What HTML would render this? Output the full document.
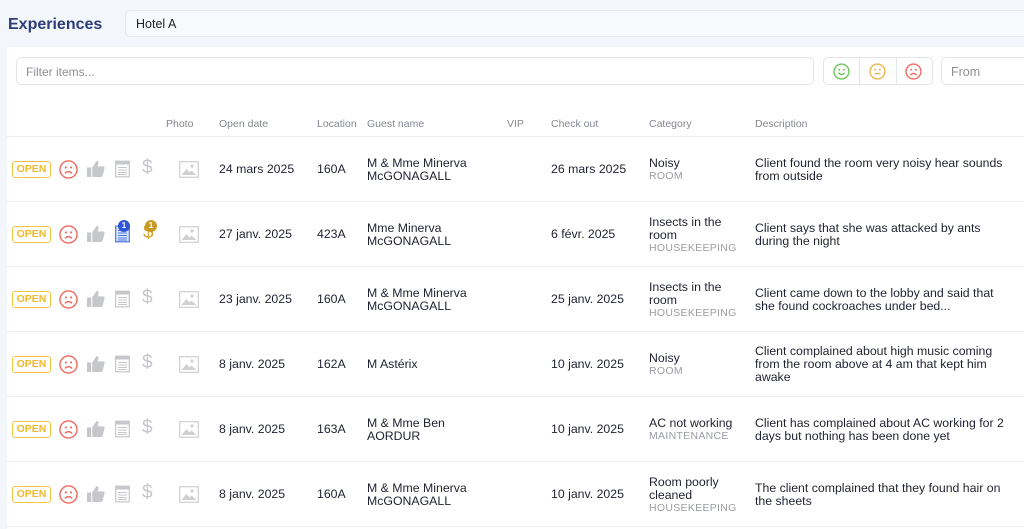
<!DOCTYPE html><html><head><meta charset="utf-8"><style>
*{margin:0;padding:0;box-sizing:border-box}
html,body{width:1024px;height:529px;overflow:hidden}
body{background:#f3f6fb;font-family:"Liberation Sans",sans-serif;color:#1f2130;position:relative}
.a{position:absolute}
.card{left:7px;top:47px;width:1030px;height:500px;background:#fff}
.inp{border:1px solid #e3e5ea;border-radius:5px;background:#fff}
.h{font-size:10.5px;color:#85878f;top:118px}
.row{position:absolute;left:7px;width:1020px;height:65px;border-top:1px solid #eceef2}
.c{position:absolute;top:0;height:65px;display:flex;flex-direction:column;justify-content:center;font-size:12.3px;line-height:13px}
.sub{font-size:10.5px;color:#9a9ca3;letter-spacing:.3px;line-height:12px}
.open{position:absolute;left:5px;top:24px;width:39px;height:17px;border:1.5px solid #f3c545;border-radius:3px;color:#f0b92d;font-size:10.5px;font-weight:bold;text-align:center;line-height:14px}
svg.i{position:absolute}
.d{position:absolute;left:135px;top:20px;font-size:19px;color:#c6c7cb}
</style></head><body>
<div class="a" style="left:8px;top:16px;font-size:16px;font-weight:bold;color:#2c3d78">Experiences</div>
<div class="a inp" style="left:125px;top:10px;width:920px;height:27px;background:#f7f9fc;border-color:#e6e9ee"><span style="position:absolute;left:10px;top:6px;font-size:12.5px;color:#222">Hotel A</span></div>
<div class="a card"></div>
<div class="a inp" style="left:16px;top:57px;width:798px;height:28px"><span style="position:absolute;left:9px;top:7px;font-size:12px;color:#8d8f96">Filter items...</span></div>
<div class="a inp" style="left:823px;top:57px;width:110px;height:28px"></div>
<div class="a" style="left:859px;top:58px;width:1px;height:26px;background:#e3e5ea"></div>
<div class="a" style="left:896px;top:58px;width:1px;height:26px;background:#e3e5ea"></div>
<svg class="a" style="left:833px;top:63px" width="17" height="17" viewBox="0 0 16 16"><circle cx="8" cy="8" r="7" fill="none" stroke="#6cc35a" stroke-width="1.3"/><circle cx="5.8" cy="6.3" r=".9" fill="#6cc35a"/><circle cx="10.2" cy="6.3" r=".9" fill="#6cc35a"/><path d="M5 9.3q3 3 6 0" fill="none" stroke="#6cc35a" stroke-width="1.3"/></svg>
<svg class="a" style="left:869px;top:63px" width="17" height="17" viewBox="0 0 16 16"><circle cx="8" cy="8" r="7" fill="none" stroke="#e6b64a" stroke-width="1.3"/><circle cx="5.8" cy="6.3" r=".9" fill="#e6b64a"/><circle cx="10.2" cy="6.3" r=".9" fill="#e6b64a"/><path d="M5.3 10h5.4" stroke="#e6b64a" stroke-width="1.3"/></svg>
<svg class="a" style="left:905px;top:63px" width="17" height="17" viewBox="0 0 16 16"><circle cx="8" cy="8" r="7" fill="none" stroke="#ee6a60" stroke-width="1.3"/><circle cx="5.8" cy="6.3" r=".9" fill="#ee6a60"/><circle cx="10.2" cy="6.3" r=".9" fill="#ee6a60"/><path d="M5 11.3q3-3 6 0" fill="none" stroke="#ee6a60" stroke-width="1.3"/></svg>
<div class="a inp" style="left:941px;top:57px;width:100px;height:28px"><span style="position:absolute;left:9px;top:7px;font-size:12.5px;color:#8d8f96">From</span></div>
<div class="a h" style="left:166px">Photo</div>
<div class="a h" style="left:219px">Open date</div>
<div class="a h" style="left:317px">Location</div>
<div class="a h" style="left:367px">Guest name</div>
<div class="a h" style="left:507px">VIP</div>
<div class="a h" style="left:551px">Check out</div>
<div class="a h" style="left:649px">Category</div>
<div class="a h" style="left:755px">Description</div>

<div class="row" style="top:136px">
<div class="open">OPEN</div>
<svg class="i" style="left:52px;top:23px" width="19" height="19" viewBox="0 0 16 16"><circle cx="8" cy="8" r="7.2" fill="none" stroke="#ee6a60" stroke-width="1.2"/><circle cx="5.8" cy="6.3" r=".9" fill="#ee6a60"/><circle cx="10.2" cy="6.3" r=".9" fill="#ee6a60"/><path d="M5 11.3q3-3 6 0" fill="none" stroke="#ee6a60" stroke-width="1.2"/></svg>
<svg class="i" style="left:80px;top:24px" width="18" height="16" viewBox="0 0 17 15"><rect x="0" y="6" width="4" height="9" fill="#c6c7cb"/><path d="M5 6l4-6q2 0 2 2l-1 3h5q2 0 1.5 2l-1.5 6q-.5 2-2 2H5z" fill="#c6c7cb"/></svg>
<svg class="i" style="left:108px;top:23px" width="15" height="18" viewBox="0 0 15 17"><rect x=".7" y=".7" width="13.6" height="15.6" fill="none" stroke="#c6c7cb" stroke-width="1.2"/><rect x="1" y="1" width="13" height="3" fill="#c6c7cb"/><path d="M3 7h9M3 9.5h9M3 12h9M3 14h9" stroke="#c6c7cb" stroke-width="1"/></svg>
<div class="d">$</div>
<svg class="i" style="left:172px;top:24px" width="20" height="17" viewBox="0 0 20 17"><rect x=".7" y=".7" width="18.6" height="15.6" fill="none" stroke="#cfd0d4" stroke-width="1.2"/><circle cx="13" cy="5" r="1.6" fill="#cfd0d4"/><path d="M2.5 14l5-6 3 3.5 2-2 5 4.5z" fill="#cfd0d4"/></svg>
<div class="c" style="left:212px">24 mars 2025</div>
<div class="c" style="left:310px">160A</div>
<div class="c" style="left:360px">M &amp; Mme Minerva<br>McGONAGALL</div>
<div class="c" style="left:544px">26 mars 2025</div>
<div class="c" style="left:642px">Noisy<span class="sub">ROOM</span></div>
<div class="c" style="left:748px">Client found the room very noisy hear sounds<br>from outside</div>
</div>

<div class="row" style="top:201px">
<div class="open">OPEN</div>
<svg class="i" style="left:52px;top:23px" width="19" height="19" viewBox="0 0 16 16"><circle cx="8" cy="8" r="7.2" fill="none" stroke="#ee6a60" stroke-width="1.2"/><circle cx="5.8" cy="6.3" r=".9" fill="#ee6a60"/><circle cx="10.2" cy="6.3" r=".9" fill="#ee6a60"/><path d="M5 11.3q3-3 6 0" fill="none" stroke="#ee6a60" stroke-width="1.2"/></svg>
<svg class="i" style="left:80px;top:24px" width="18" height="16" viewBox="0 0 17 15"><rect x="0" y="6" width="4" height="9" fill="#c6c7cb"/><path d="M5 6l4-6q2 0 2 2l-1 3h5q2 0 1.5 2l-1.5 6q-.5 2-2 2H5z" fill="#c6c7cb"/></svg>
<svg class="i" style="left:108px;top:23px" width="15" height="18" viewBox="0 0 15 17"><rect x=".7" y=".7" width="13.6" height="15.6" fill="#dce6fb" stroke="#4a78e0" stroke-width="1.2"/><path d="M3 5h9M3 7.5h9M3 10h9M3 12.5h9M3 14.5h9" stroke="#4a78e0" stroke-width="1"/></svg>
<div class="a" style="left:111px;top:18px;width:12px;height:12px;border-radius:6px;background:#2f55d4;color:#fff;font-size:8px;font-weight:bold;text-align:center;line-height:12px">1</div>
<div class="d" style="color:#d4a52a;left:136px">$</div>
<div class="a" style="left:138px;top:18px;width:12px;height:12px;border-radius:6px;background:#c89a25;color:#fff;font-size:8px;font-weight:bold;text-align:center;line-height:12px">1</div>
<svg class="i" style="left:172px;top:24px" width="20" height="17" viewBox="0 0 20 17"><rect x=".7" y=".7" width="18.6" height="15.6" fill="none" stroke="#cfd0d4" stroke-width="1.2"/><circle cx="13" cy="5" r="1.6" fill="#cfd0d4"/><path d="M2.5 14l5-6 3 3.5 2-2 5 4.5z" fill="#cfd0d4"/></svg>
<div class="c" style="left:212px">27 janv. 2025</div>
<div class="c" style="left:310px">423A</div>
<div class="c" style="left:360px">Mme Minerva<br>McGONAGALL</div>
<div class="c" style="left:544px">6 févr. 2025</div>
<div class="c" style="left:642px">Insects in the<br>room<span class="sub">HOUSEKEEPING</span></div>
<div class="c" style="left:748px">Client says that she was attacked by ants<br>during the night</div>
</div>

<div class="row" style="top:266px">
<div class="open">OPEN</div>
<svg class="i" style="left:52px;top:23px" width="19" height="19" viewBox="0 0 16 16"><circle cx="8" cy="8" r="7.2" fill="none" stroke="#ee6a60" stroke-width="1.2"/><circle cx="5.8" cy="6.3" r=".9" fill="#ee6a60"/><circle cx="10.2" cy="6.3" r=".9" fill="#ee6a60"/><path d="M5 11.3q3-3 6 0" fill="none" stroke="#ee6a60" stroke-width="1.2"/></svg>
<svg class="i" style="left:80px;top:24px" width="18" height="16" viewBox="0 0 17 15"><rect x="0" y="6" width="4" height="9" fill="#c6c7cb"/><path d="M5 6l4-6q2 0 2 2l-1 3h5q2 0 1.5 2l-1.5 6q-.5 2-2 2H5z" fill="#c6c7cb"/></svg>
<svg class="i" style="left:108px;top:23px" width="15" height="18" viewBox="0 0 15 17"><rect x=".7" y=".7" width="13.6" height="15.6" fill="none" stroke="#c6c7cb" stroke-width="1.2"/><rect x="1" y="1" width="13" height="3" fill="#c6c7cb"/><path d="M3 7h9M3 9.5h9M3 12h9M3 14h9" stroke="#c6c7cb" stroke-width="1"/></svg>
<div class="d">$</div>
<svg class="i" style="left:172px;top:24px" width="20" height="17" viewBox="0 0 20 17"><rect x=".7" y=".7" width="18.6" height="15.6" fill="none" stroke="#cfd0d4" stroke-width="1.2"/><circle cx="13" cy="5" r="1.6" fill="#cfd0d4"/><path d="M2.5 14l5-6 3 3.5 2-2 5 4.5z" fill="#cfd0d4"/></svg>
<div class="c" style="left:212px">23 janv. 2025</div>
<div class="c" style="left:310px">160A</div>
<div class="c" style="left:360px">M &amp; Mme Minerva<br>McGONAGALL</div>
<div class="c" style="left:544px">25 janv. 2025</div>
<div class="c" style="left:642px">Insects in the<br>room<span class="sub">HOUSEKEEPING</span></div>
<div class="c" style="left:748px">Client came down to the lobby and said that<br>she found cockroaches under bed...</div>
</div>

<div class="row" style="top:331px">
<div class="open">OPEN</div>
<svg class="i" style="left:52px;top:23px" width="19" height="19" viewBox="0 0 16 16"><circle cx="8" cy="8" r="7.2" fill="none" stroke="#ee6a60" stroke-width="1.2"/><circle cx="5.8" cy="6.3" r=".9" fill="#ee6a60"/><circle cx="10.2" cy="6.3" r=".9" fill="#ee6a60"/><path d="M5 11.3q3-3 6 0" fill="none" stroke="#ee6a60" stroke-width="1.2"/></svg>
<svg class="i" style="left:80px;top:24px" width="18" height="16" viewBox="0 0 17 15"><rect x="0" y="6" width="4" height="9" fill="#c6c7cb"/><path d="M5 6l4-6q2 0 2 2l-1 3h5q2 0 1.5 2l-1.5 6q-.5 2-2 2H5z" fill="#c6c7cb"/></svg>
<svg class="i" style="left:108px;top:23px" width="15" height="18" viewBox="0 0 15 17"><rect x=".7" y=".7" width="13.6" height="15.6" fill="none" stroke="#c6c7cb" stroke-width="1.2"/><rect x="1" y="1" width="13" height="3" fill="#c6c7cb"/><path d="M3 7h9M3 9.5h9M3 12h9M3 14h9" stroke="#c6c7cb" stroke-width="1"/></svg>
<div class="d">$</div>
<svg class="i" style="left:172px;top:24px" width="20" height="17" viewBox="0 0 20 17"><rect x=".7" y=".7" width="18.6" height="15.6" fill="none" stroke="#cfd0d4" stroke-width="1.2"/><circle cx="13" cy="5" r="1.6" fill="#cfd0d4"/><path d="M2.5 14l5-6 3 3.5 2-2 5 4.5z" fill="#cfd0d4"/></svg>
<div class="c" style="left:212px">8 janv. 2025</div>
<div class="c" style="left:310px">162A</div>
<div class="c" style="left:360px">M Astérix</div>
<div class="c" style="left:544px">10 janv. 2025</div>
<div class="c" style="left:642px">Noisy<span class="sub">ROOM</span></div>
<div class="c" style="left:748px">Client complained about high music coming<br>from the room above at 4 am that kept him<br>awake</div>
</div>

<div class="row" style="top:396px">
<div class="open">OPEN</div>
<svg class="i" style="left:52px;top:23px" width="19" height="19" viewBox="0 0 16 16"><circle cx="8" cy="8" r="7.2" fill="none" stroke="#ee6a60" stroke-width="1.2"/><circle cx="5.8" cy="6.3" r=".9" fill="#ee6a60"/><circle cx="10.2" cy="6.3" r=".9" fill="#ee6a60"/><path d="M5 11.3q3-3 6 0" fill="none" stroke="#ee6a60" stroke-width="1.2"/></svg>
<svg class="i" style="left:80px;top:24px" width="18" height="16" viewBox="0 0 17 15"><rect x="0" y="6" width="4" height="9" fill="#c6c7cb"/><path d="M5 6l4-6q2 0 2 2l-1 3h5q2 0 1.5 2l-1.5 6q-.5 2-2 2H5z" fill="#c6c7cb"/></svg>
<svg class="i" style="left:108px;top:23px" width="15" height="18" viewBox="0 0 15 17"><rect x=".7" y=".7" width="13.6" height="15.6" fill="none" stroke="#c6c7cb" stroke-width="1.2"/><rect x="1" y="1" width="13" height="3" fill="#c6c7cb"/><path d="M3 7h9M3 9.5h9M3 12h9M3 14h9" stroke="#c6c7cb" stroke-width="1"/></svg>
<div class="d">$</div>
<svg class="i" style="left:172px;top:24px" width="20" height="17" viewBox="0 0 20 17"><rect x=".7" y=".7" width="18.6" height="15.6" fill="none" stroke="#cfd0d4" stroke-width="1.2"/><circle cx="13" cy="5" r="1.6" fill="#cfd0d4"/><path d="M2.5 14l5-6 3 3.5 2-2 5 4.5z" fill="#cfd0d4"/></svg>
<div class="c" style="left:212px">8 janv. 2025</div>
<div class="c" style="left:310px">163A</div>
<div class="c" style="left:360px">M &amp; Mme Ben<br>AORDUR</div>
<div class="c" style="left:544px">10 janv. 2025</div>
<div class="c" style="left:642px">AC not working<span class="sub">MAINTENANCE</span></div>
<div class="c" style="left:748px">Client has complained about AC working for 2<br>days but nothing has been done yet</div>
</div>

<div class="row" style="top:461px">
<div class="open">OPEN</div>
<svg class="i" style="left:52px;top:23px" width="19" height="19" viewBox="0 0 16 16"><circle cx="8" cy="8" r="7.2" fill="none" stroke="#ee6a60" stroke-width="1.2"/><circle cx="5.8" cy="6.3" r=".9" fill="#ee6a60"/><circle cx="10.2" cy="6.3" r=".9" fill="#ee6a60"/><path d="M5 11.3q3-3 6 0" fill="none" stroke="#ee6a60" stroke-width="1.2"/></svg>
<svg class="i" style="left:80px;top:24px" width="18" height="16" viewBox="0 0 17 15"><rect x="0" y="6" width="4" height="9" fill="#c6c7cb"/><path d="M5 6l4-6q2 0 2 2l-1 3h5q2 0 1.5 2l-1.5 6q-.5 2-2 2H5z" fill="#c6c7cb"/></svg>
<svg class="i" style="left:108px;top:23px" width="15" height="18" viewBox="0 0 15 17"><rect x=".7" y=".7" width="13.6" height="15.6" fill="none" stroke="#c6c7cb" stroke-width="1.2"/><rect x="1" y="1" width="13" height="3" fill="#c6c7cb"/><path d="M3 7h9M3 9.5h9M3 12h9M3 14h9" stroke="#c6c7cb" stroke-width="1"/></svg>
<div class="d">$</div>
<svg class="i" style="left:172px;top:24px" width="20" height="17" viewBox="0 0 20 17"><rect x=".7" y=".7" width="18.6" height="15.6" fill="none" stroke="#cfd0d4" stroke-width="1.2"/><circle cx="13" cy="5" r="1.6" fill="#cfd0d4"/><path d="M2.5 14l5-6 3 3.5 2-2 5 4.5z" fill="#cfd0d4"/></svg>
<div class="c" style="left:212px">8 janv. 2025</div>
<div class="c" style="left:310px">160A</div>
<div class="c" style="left:360px">M &amp; Mme Minerva<br>McGONAGALL</div>
<div class="c" style="left:544px">10 janv. 2025</div>
<div class="c" style="left:642px">Room poorly<br>cleaned<span class="sub">HOUSEKEEPING</span></div>
<div class="c" style="left:748px">The client complained that they found hair on<br>the sheets</div>
</div>
<div class="a" style="left:7px;top:526px;width:1020px;height:1px;background:#eceef2"></div>
</body></html>
